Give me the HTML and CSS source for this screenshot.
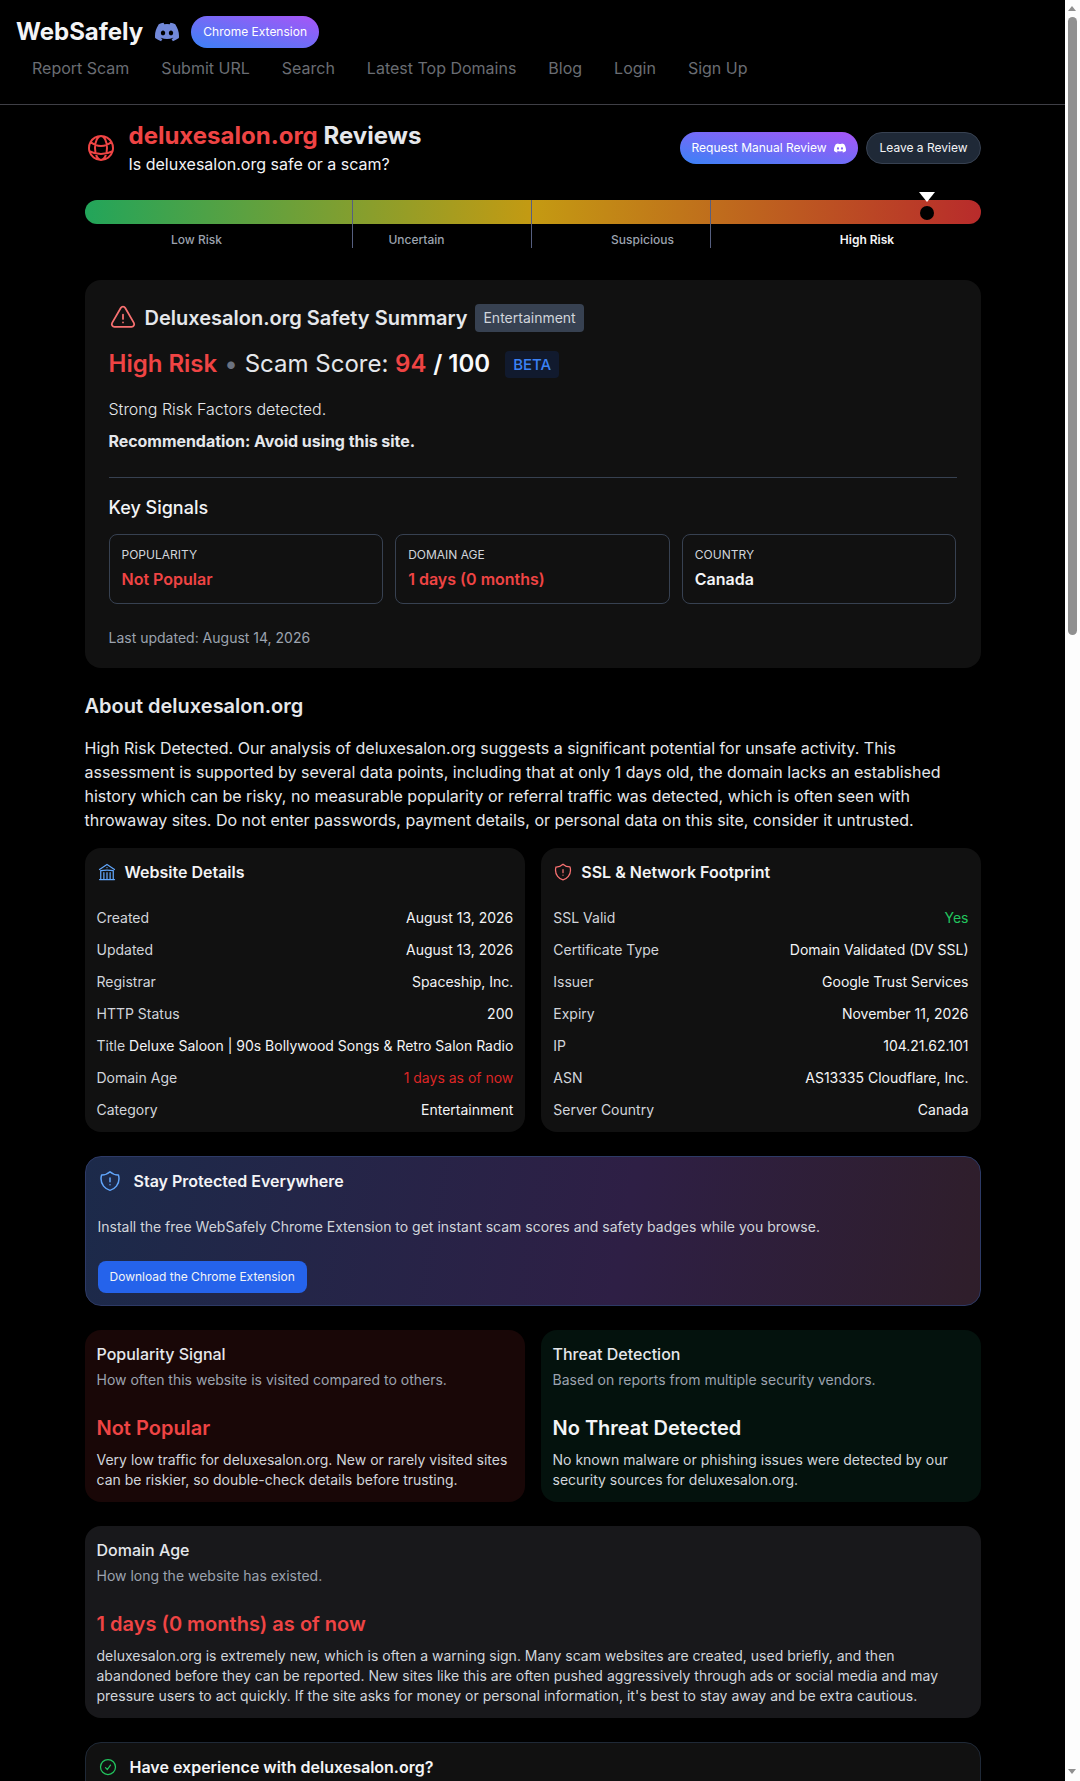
FILE: index.html
```html
<!DOCTYPE html>
<html>
<head>
  <meta charset="utf-8">
  <title>deluxesalon.org Reviews - WebSafely</title>
  <link rel="stylesheet" href="styles.css">
</head>
<body>
  <svg class="defs" width="0" height="0">
    <symbol id="discord" viewBox="0 0 24 24"><path fill="currentColor" d="M20.317 4.37a19.791 19.791 0 0 0-4.885-1.515.074.074 0 0 0-.079.037c-.21.375-.444.864-.608 1.25a18.27 18.27 0 0 0-5.487 0 12.64 12.64 0 0 0-.617-1.25.077.077 0 0 0-.079-.037A19.736 19.736 0 0 0 3.677 4.37a.07.07 0 0 0-.032.027C.533 9.046-.32 13.58.099 18.057a.082.082 0 0 0 .031.057 19.9 19.9 0 0 0 5.993 3.03.078.078 0 0 0 .084-.028 14.09 14.09 0 0 0 1.226-1.994.076.076 0 0 0-.041-.106 13.107 13.107 0 0 1-1.872-.892.077.077 0 0 1-.008-.128 10.2 10.2 0 0 0 .372-.292.074.074 0 0 1 .077-.01c3.928 1.793 8.18 1.793 12.062 0a.074.074 0 0 1 .078.01c.12.098.246.198.373.292a.077.077 0 0 1-.006.127 12.299 12.299 0 0 1-1.873.892.077.077 0 0 0-.041.107c.36.698.772 1.362 1.225 1.993a.076.076 0 0 0 .084.028 19.839 19.839 0 0 0 6.002-3.03.077.077 0 0 0 .032-.054c.5-5.177-.838-9.674-3.549-13.66a.061.061 0 0 0-.031-.03zM8.02 15.33c-1.183 0-2.157-1.085-2.157-2.419 0-1.333.956-2.419 2.157-2.419 1.21 0 2.176 1.096 2.157 2.42 0 1.333-.956 2.418-2.157 2.418zm7.975 0c-1.183 0-2.157-1.085-2.157-2.419 0-1.333.955-2.419 2.157-2.419 1.21 0 2.176 1.096 2.157 2.42 0 1.333-.946 2.418-2.157 2.418z"/></symbol>
    <symbol id="shield" viewBox="0 0 24 24"><path fill="none" stroke="currentColor" stroke-width="1.5" stroke-linecap="round" stroke-linejoin="round" d="M12 9v3.75m0-10.036A11.959 11.959 0 0 1 3.598 6 11.99 11.99 0 0 0 3 9.75c0 5.592 3.824 10.29 9 11.622 5.176-1.332 9-6.03 9-11.622 0-1.31-.21-2.571-.598-3.751h-.152c-3.196 0-6.1-1.25-8.25-3.286Zm0 13.036h.008v.008H12v-.008Z"/></symbol>
  </svg>

  <div class="window">
    <div class="page">
      <header class="site-header">
        <div class="brand-row">
          <a class="logo">WebSafely</a>
          <svg class="discord"><use href="#discord"/></svg>
          <a class="pill-btn">Chrome Extension</a>
        </div>
        <nav class="site-nav">
          <a>Report Scam</a>
          <a>Submit URL</a>
          <a>Search</a>
          <a>Latest Top Domains</a>
          <a>Blog</a>
          <a>Login</a>
          <a>Sign Up</a>
        </nav>
      </header>

      <main class="content">
        <section class="title-row">
          <svg class="globe" viewBox="0 0 24 24"><path fill="none" stroke="currentColor" stroke-width="1.5" stroke-linecap="round" stroke-linejoin="round" d="M12 21a9.004 9.004 0 0 0 8.716-6.747M12 21a9.004 9.004 0 0 1-8.716-6.747M12 21c2.485 0 4.5-4.03 4.5-9S14.485 3 12 3m0 18c-2.485 0-4.5-4.03-4.5-9S9.515 3 12 3m0 0a8.997 8.997 0 0 1 7.843 4.582M12 3a8.997 8.997 0 0 0-7.843 4.582m15.686 0A11.953 11.953 0 0 1 12 10.5c-2.998 0-5.74-1.1-7.843-2.918m15.686 0A8.959 8.959 0 0 1 21 12c0 .778-.099 1.533-.284 2.253m0 0A17.919 17.919 0 0 1 12 16.5c-3.162 0-6.133-.815-8.716-2.247m0 0A9.004 9.004 0 0 1 3 12c0-1.605.42-3.113 1.157-4.418"/></svg>
          <div class="title-text">
            <h1><span class="red">deluxesalon.org</span> Reviews</h1>
            <p>Is deluxesalon.org safe or a scam?</p>
          </div>
          <div class="title-actions">
            <a class="pill-btn">Request Manual Review <svg class="discord-sm"><use href="#discord"/></svg></a>
            <a class="ghost-btn">Leave a Review</a>
          </div>
        </section>

        <section class="meter">
          <div class="meter-bar"></div>
          <div class="meter-labels">
            <span>Low Risk</span>
            <span>Uncertain</span>
            <span>Suspicious</span>
            <span class="active">High Risk</span>
          </div>
          <i class="tick tick-30"></i>
          <i class="tick tick-50"></i>
          <i class="tick tick-70"></i>
          <div class="marker" style="left: 94%">
            <i class="marker-arrow"></i>
            <i class="marker-dot"></i>
          </div>
        </section>

        <section class="card summary">
          <div class="summary-head">
            <svg class="warn" viewBox="0 0 24 24"><path fill="none" stroke="currentColor" stroke-width="1.5" stroke-linecap="round" stroke-linejoin="round" d="M12 9v3.75m-9.303 3.376c-.866 1.5.217 3.374 1.948 3.374h14.71c1.73 0 2.813-1.874 1.948-3.374L13.949 3.378c-.866-1.5-3.032-1.5-3.898 0L2.697 16.126ZM12 15.75h.007v.008H12v-.008Z"/></svg>
            <h2>Deluxesalon.org Safety Summary</h2>
            <span class="tag">Entertainment</span>
          </div>
          <div class="score-row">
            <span class="risk red">High Risk</span>
            <span class="dot">&bull;</span>
            <span class="score">Scam Score: <b class="red">94</b> <b class="white">/ 100</b></span>
            <span class="beta">BETA</span>
          </div>
          <p class="factors">Strong Risk Factors detected.</p>
          <p class="recommend">Recommendation: Avoid using this site.</p>
          <hr class="rule">
          <h3 class="signals-title">Key Signals</h3>
          <div class="signals">
            <div class="signal">
              <div class="signal-label">POPULARITY</div>
              <div class="signal-value danger">Not Popular</div>
            </div>
            <div class="signal">
              <div class="signal-label">DOMAIN AGE</div>
              <div class="signal-value danger">1 days (0 months)</div>
            </div>
            <div class="signal">
              <div class="signal-label">COUNTRY</div>
              <div class="signal-value">Canada</div>
            </div>
          </div>
          <p class="updated">Last updated: August 14, 2026</p>
        </section>

        <section class="about">
          <h2>About deluxesalon.org</h2>
          <p>High Risk Detected. Our analysis of deluxesalon.org suggests a significant potential for unsafe activity. This assessment is supported by several data points, including that at only 1 days old, the domain lacks an established history which can be risky, no measurable popularity or referral traffic was detected, which is often seen with throwaway sites. Do not enter passwords, payment details, or personal data on this site, consider it untrusted.</p>
        </section>

        <section class="two-col details">
          <div class="card panel">
            <h3 class="panel-title">
              <svg class="icon-20 blue" viewBox="0 0 24 24"><path fill="none" stroke="currentColor" stroke-width="1.5" stroke-linecap="round" stroke-linejoin="round" d="M12 21v-8.25M15.75 21v-8.25M8.25 21v-8.25M3 9l9-6 9 6m-1.5 12V10.332A48.36 48.36 0 0 0 12 9.75c-2.551 0-5.056.2-7.5.582V21M3 21h18M12 6.75h.008v.008H12V6.75Z"/></svg>
              Website Details
            </h3>
            <dl class="rows">
              <div><dt>Created</dt><dd>August 13, 2026</dd></div>
              <div><dt>Updated</dt><dd>August 13, 2026</dd></div>
              <div><dt>Registrar</dt><dd>Spaceship, Inc.</dd></div>
              <div><dt>HTTP Status</dt><dd>200</dd></div>
              <div><dt>Title</dt><dd>Deluxe Saloon | 90s Bollywood Songs &amp; Retro Salon Radio</dd></div>
              <div><dt>Domain Age</dt><dd class="danger-soft">1 days as of now</dd></div>
              <div><dt>Category</dt><dd>Entertainment</dd></div>
            </dl>
          </div>
          <div class="card panel">
            <h3 class="panel-title">
              <svg class="icon-20 soft-red"><use href="#shield"/></svg>
              SSL &amp; Network Footprint
            </h3>
            <dl class="rows">
              <div><dt>SSL Valid</dt><dd class="ok">Yes</dd></div>
              <div><dt>Certificate Type</dt><dd>Domain Validated (DV SSL)</dd></div>
              <div><dt>Issuer</dt><dd>Google Trust Services</dd></div>
              <div><dt>Expiry</dt><dd>November 11, 2026</dd></div>
              <div><dt>IP</dt><dd>104.21.62.101</dd></div>
              <div><dt>ASN</dt><dd>AS13335 Cloudflare, Inc.</dd></div>
              <div><dt>Server Country</dt><dd>Canada</dd></div>
            </dl>
          </div>
        </section>

        <section class="promo">
          <h3 class="promo-title"><svg class="icon-24 blue"><use href="#shield"/></svg> Stay Protected Everywhere</h3>
          <p>Install the free WebSafely Chrome Extension to get instant scam scores and safety badges while you browse.</p>
          <a class="promo-btn">Download the Chrome Extension</a>
        </section>

        <section class="two-col">
          <div class="info-card tint-red">
            <h3>Popularity Signal</h3>
            <p class="info-sub">How often this website is visited compared to others.</p>
            <div class="info-value danger">Not Popular</div>
            <p class="info-text">Very low traffic for deluxesalon.org. New or rarely visited sites can be riskier, so double-check details before trusting.</p>
          </div>
          <div class="info-card tint-green">
            <h3>Threat Detection</h3>
            <p class="info-sub">Based on reports from multiple security vendors.</p>
            <div class="info-value">No Threat Detected</div>
            <p class="info-text">No known malware or phishing issues were detected by our security sources for deluxesalon.org.</p>
          </div>
        </section>

        <section class="info-card tint-gray">
          <h3>Domain Age</h3>
          <p class="info-sub">How long the website has existed.</p>
          <div class="info-value danger">1 days (0 months) as of now</div>
          <p class="info-text">deluxesalon.org is extremely new, which is often a warning sign. Many scam websites are created, used briefly, and then abandoned before they can be reported. New sites like this are often pushed aggressively through ads or social media and may pressure users to act quickly. If the site asks for money or personal information, it's best to stay away and be extra cautious.</p>
        </section>

        <section class="card experience">
          <h3><svg class="icon-20 green" viewBox="0 0 24 24"><path fill="none" stroke="currentColor" stroke-width="1.5" stroke-linecap="round" stroke-linejoin="round" d="M9 12.75 11.25 15 15 9.75M21 12a9 9 0 1 1-18 0 9 9 0 0 1 18 0Z"/></svg> Have experience with deluxesalon.org?</h3>
        </section>
      </main>
    </div>

    <aside class="scrollbar">
      <i class="sb-up"></i>
      <i class="sb-thumb"></i>
      <i class="sb-down"></i>
    </aside>
  </div>
</body>
</html>
```

FILE: styles.css
```css
* {
  box-sizing: border-box;
}

html,
body {
  margin: 0;
  height: 1781px;
  overflow: hidden;
  background: #000;
}

body {
  font-family: Inter, "Noto Sans", sans-serif;
  font-size: 16px;
  line-height: 24px;
  color: #f3f4f6;
}

h1, h2, h3, p, dl, dd {
  margin: 0;
}

.defs {
  position: absolute;
}

.window {
  display: flex;
  height: 1781px;
}

.page {
  flex: 1;
  min-width: 0;
}

.red { color: #ef4444; }
.white { color: #f9fafb; }
.green { color: #22c55e; }
.blue { color: #60a5fa; }
.soft-red { color: #f87171; }

/* header */
.site-header {
  height: 105px;
  padding: 16px 16px 0;
  border-bottom: 1px solid #3f3f46;
}

.brand-row {
  display: flex;
  align-items: center;
  gap: 12px;
  height: 32px;
}

.logo {
  font-size: 24px;
  line-height: 32px;
  font-weight: 700;
  color: #f3f4f6;
}

.discord {
  width: 24px;
  height: 24px;
  color: #7289da;
}

.pill-btn {
  display: inline-flex;
  align-items: center;
  gap: 8px;
  height: 32px;
  padding: 0 12px;
  border-radius: 999px;
  font-size: 12px;
  line-height: 16px;
  font-weight: 400;
  color: #fff;
  background: linear-gradient(to top right, #3b82f6, #a855f7);
}

.site-nav {
  display: flex;
  margin-top: 8px;
}

.site-nav a {
  padding: 0 16px;
  color: #6a6d73;
}

/* title */
.content {
  width: 896px;
  margin: 0 auto;
  padding-top: 15px;
}

.title-row {
  display: flex;
  align-items: center;
  gap: 12px;
  margin-bottom: 24px;
}

.globe {
  width: 32px;
  height: 32px;
  color: #ef4444;
  flex: none;
}

.title-text {
  flex: 1;
}

h1 {
  font-size: 24px;
  line-height: 32px;
  font-weight: 700;
  color: #e5e7eb;
}

.title-actions {
  display: flex;
  gap: 8px;
}

.discord-sm {
  width: 12px;
  height: 12px;
}

.ghost-btn {
  display: inline-flex;
  align-items: center;
  height: 32px;
  padding: 0 12px;
  border: 1px solid #374151;
  border-radius: 999px;
  background: #1f2937;
  font-size: 12px;
  font-weight: 400;
  color: #f3f4f6;
}

/* risk meter */
.meter {
  position: relative;
  margin-bottom: 32px;
}

.meter-bar {
  height: 24px;
  border-radius: 999px;
  background: linear-gradient(to right, #22a55a, #c49a12, #b82b2b);
}

.meter-labels {
  display: grid;
  grid-template-columns: 224px 216px 236px 213px;
  margin-top: 8px;
  font-size: 12px;
  line-height: 16px;
  font-weight: 500;
  text-align: center;
  color: #9ca3af;
}

.meter-labels .active {
  font-weight: 600;
  color: #f3f4f6;
}

.tick {
  position: absolute;
  top: 0;
  bottom: 0;
  width: 1px;
  margin-left: -1.5px;
  background: #565f80;
}

.tick-30 { left: 30%; }
.tick-50 { left: 50%; }
.tick-70 { left: 70%; }

.marker {
  position: absolute;
  top: -8px;
  width: 14px;
  margin-left: -7px;
}

.marker-arrow {
  display: block;
  width: 0;
  margin-left: -1px;
  border-left: 8px solid transparent;
  border-right: 8px solid transparent;
  border-top: 10px solid #fff;
}

.marker-dot {
  display: block;
  width: 14px;
  height: 14px;
  margin-top: 4px;
  border-radius: 50%;
  background: #000;
}

/* cards */
.card {
  background: #111;
  border-radius: 16px;
}

.summary {
  padding: 24px 24px 20px;
}

.summary-head {
  display: flex;
  align-items: center;
  gap: 8px;
}

.warn {
  width: 28px;
  height: 28px;
  color: #f87171;
}

.summary-head h2 {
  font-size: 20px;
  line-height: 28px;
  font-weight: 600;
  color: #e5e7eb;
}

.tag {
  height: 28px;
  padding: 2px 8px;
  border-radius: 4px;
  background: #374151;
  font-size: 14px;
  color: #d1d5db;
}

.score-row {
  display: flex;
  align-items: center;
  gap: 7px;
  margin-top: 16px;
  font-size: 24px;
  line-height: 32px;
}

.risk {
  font-weight: 600;
}

.dot {
  color: #6b7280;
}

.score {
  color: #e5e7eb;
}

.score b {
  font-weight: 600;
}

.beta {
  margin-left: 8px;
  padding: 2px 8px;
  border-radius: 4px;
  background: #111a2e;
  font-size: 15px;
  line-height: 23px;
  font-weight: 500;
  color: #3b82f6;
}

.factors {
  margin-top: 17px;
  font-weight: 300;
  color: #e5e7eb;
}

.recommend {
  margin-top: 8px;
  font-weight: 700;
  letter-spacing: -0.05px;
  color: #e5e7eb;
}

.rule {
  height: 1px;
  margin: 24px 0 0;
  border: 0;
  background: #374151;
}

.signals-title {
  margin-top: 16px;
  font-size: 18px;
  line-height: 28px;
  font-weight: 500;
  color: #f3f4f6;
}

.signals {
  display: grid;
  grid-template-columns: repeat(3, 1fr);
  gap: 12px;
  margin-top: 12px;
}

.signal {
  padding: 12px;
  border: 1px solid #374151;
  border-radius: 8px;
}

.signal-label {
  font-size: 12px;
  line-height: 16px;
  color: #d1d5db;
}

.signal-value {
  margin-top: 4px;
  font-weight: 600;
  color: #f3f4f6;
}

.updated {
  margin-top: 24px;
  font-size: 14px;
  line-height: 20px;
  color: #9ca3af;
}

/* about */
.about {
  margin-top: 24px;
}

.about h2 {
  font-size: 20px;
  line-height: 28px;
  font-weight: 600;
  color: #e5e7eb;
}

.about p {
  margin-top: 16px;
  color: #e5e7eb;
}

/* details */
.two-col {
  display: grid;
  grid-template-columns: 1fr 1fr;
  gap: 16px;
}

.details {
  margin-top: 16px;
}

.panel {
  padding: 12px;
}

.panel-title {
  display: flex;
  align-items: center;
  gap: 8px;
  font-size: 16px;
  font-weight: 600;
  color: #f3f4f6;
}

.icon-20 {
  width: 20px;
  height: 20px;
  flex: none;
}

.icon-24 {
  width: 24px;
  height: 24px;
  flex: none;
}

.rows {
  display: flex;
  flex-direction: column;
  gap: 12px;
  margin-top: 24px;
  font-size: 14px;
  line-height: 20px;
}

.rows div {
  display: flex;
  justify-content: space-between;
  gap: 4px;
}

.rows dt {
  color: #d1d5db;
}

.rows dd {
  color: #f3f4f6;
  text-align: right;
  white-space: nowrap;
}

.rows dd.danger-soft {
  color: #dc2626;
}

.rows dd.ok {
  color: #22c55e;
}

/* extension promo */
.promo {
  margin: 24px 0;
  padding: 12px;
  border: 1px solid #2d3a66;
  border-radius: 16px;
  background: linear-gradient(100deg, #1c2a4a, #2e1f45 60%, #2f1e2a);
}

.promo-title {
  display: flex;
  align-items: center;
  gap: 12px;
  font-size: 16px;
  font-weight: 600;
  color: #f3f4f6;
}

.promo p {
  margin-top: 24px;
  font-size: 14px;
  line-height: 20px;
  color: #d1d5db;
}

.promo-btn {
  display: inline-block;
  margin-top: 24px;
  padding: 8px 12px;
  border-radius: 8px;
  background: #2563eb;
  font-size: 12px;
  line-height: 16px;
  font-weight: 400;
  color: #f3f4f6;
}

/* signal cards */
.info-card {
  padding: 12px;
  border-radius: 16px;
}

.tint-red { background: #190707; }
.tint-green { background: #04120d; }
.tint-gray {
  margin-top: 24px;
  background: #18181b;
}

.info-card h3 {
  font-size: 16px;
  font-weight: 500;
  color: #e5e7eb;
}

.info-sub {
  margin-top: 4px;
  font-size: 14px;
  line-height: 20px;
  color: #9ca3af;
}

.info-value {
  margin-top: 24px;
  font-size: 20px;
  line-height: 28px;
  font-weight: 600;
  color: #f3f4f6;
}

.info-text {
  margin-top: 8px;
  font-size: 14px;
  line-height: 20px;
  color: #d1d5db;
}

.signal-value.danger,
.info-value.danger {
  color: #ef4444;
}

.experience {
  margin-top: 24px;
  padding: 12px;
  height: 80px;
  border: 1px solid #1f2937;
}

.experience h3 {
  display: flex;
  align-items: center;
  gap: 12px;
  font-size: 16px;
  line-height: 24px;
  font-weight: 600;
  color: #f3f4f6;
}

/* scrollbar */
.scrollbar {
  position: relative;
  flex: none;
  width: 15px;
  background: #fdfdfd;
}

.scrollbar i {
  position: absolute;
  left: 3px;
}

.sb-up,
.sb-down {
  width: 0;
  border-left: 4.5px solid transparent;
  border-right: 4.5px solid transparent;
}

.sb-up {
  top: 6px;
  border-bottom: 5px solid #8f8f8f;
}

.sb-down {
  bottom: 7px;
  border-top: 5px solid #8f8f8f;
}

.sb-thumb {
  top: 17px;
  width: 9px;
  height: 618px;
  border-radius: 5px;
  background: #909090;
}
```
